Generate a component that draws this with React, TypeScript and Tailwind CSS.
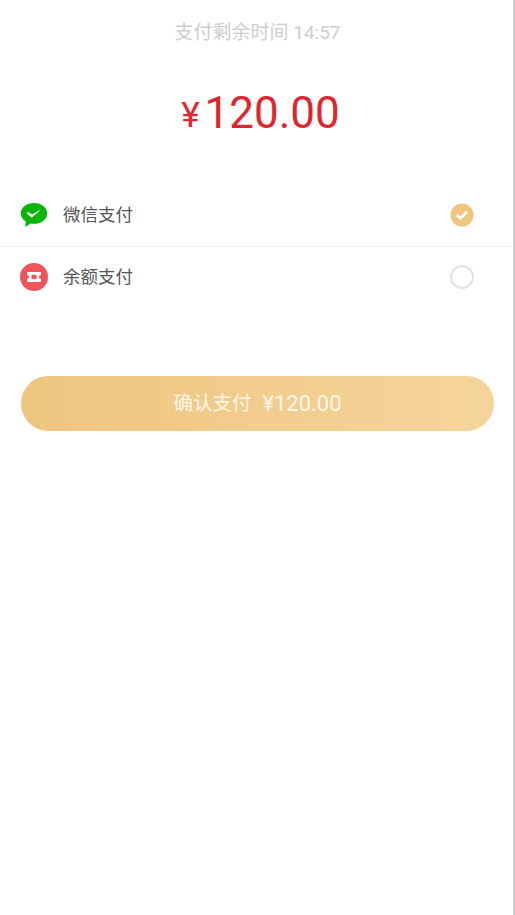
const cjk = "font-['Roboto','Noto_Sans_CJK_SC',sans-serif]";

const WechatIcon = () => (
  <svg width="28" height="26" viewBox="0 0 28 26">
    <path d="M14 1C6.6 1 .8 5.6.8 11.4c0 3.3 1.9 6.2 5 8.1L5.2 25l5.6-3.5c1 .2 2.1.3 3.2.3 7.4 0 13.2-4.6 13.2-10.4S21.4 1 14 1z" fill="#09b509" />
    <path d="M6.5 11.2l1.8-1.3 3.7 2.5 9-5-8.4 7.7c-.6.5-1.3.4-1.8-.1z" fill="#fff" />
  </svg>
);

const BalanceIcon = () => (
  <svg width="28" height="28" viewBox="0 0 28 28">
    <circle cx="14" cy="14" r="14" fill="#f1545a" />
    <path d="M7 9h14v3a2 2 0 0 0 0 4v3H7v-3a2 2 0 0 0 0-4z" fill="#fff" />
    <rect x="11.5" y="11.8" width="5" height="4.4" fill="#f1545a" />
  </svg>
);

const Checked = () => (
  <svg width="24" height="24" viewBox="0 0 24 24">
    <circle cx="12" cy="12" r="11.5" fill="#efc57f" />
    <path d="M6.8 12l3.6 3.3 6.8-6.6" fill="none" stroke="#fff" strokeWidth="2.8" />
  </svg>
);

const rows = [
  { name: "微信支付", icon: <WechatIcon />, checked: true },
  { name: "余额支付", icon: <BalanceIcon />, checked: false },
];

export default function App() {
  return (
    <div className={`h-[915px] w-[515px] overflow-hidden bg-white ${cjk}`}>
      <div className="h-full w-[515px] border-r-2 border-[#cfcfcf]">
        <p className="pl-[2px] pt-[19px] text-center text-[19px] leading-[28px] text-[#cdcdcd]">支付剩余时间 14:57</p>
        <p className="mt-[36px] flex h-[60px] items-center justify-center pl-[8px] text-[44px] leading-[60px] text-[#e1252f]">
          <span className="mr-[5px] mt-[6px] text-[35px]">¥</span>
          <span>120.00</span>
        </p>
        <div className="mt-[41px]">
          {rows.map((row, i) => (
            <div
              key={row.name}
              className={`flex items-center pl-[20px] pr-[39px] ${i === 0 ? "h-[63px] border-b border-[#efefef]" : "h-[60px]"}`}
            >
              <div className="flex w-[28px] justify-center">{row.icon}</div>
              <span className="ml-[15px] flex-1 text-[17.5px] text-[#555555]">{row.name}</span>
              {row.checked ? (
                <Checked />
              ) : (
                <div className="h-[24px] w-[24px] rounded-full border-2 border-[#e2e2e2]" />
              )}
            </div>
          ))}
        </div>
        <div className="pl-[21px] pr-[19px] pt-[69px]">
          <button className="flex h-[55px] w-full items-center justify-center rounded-full bg-gradient-to-r from-[#efc57f] to-[#f5d49c] text-[19.5px] text-[#fff8ea]">
            <span>确认支付</span>
            <span className="ml-[11px] text-[22px]">¥120.00</span>
          </button>
        </div>
      </div>
    </div>
  );
}
